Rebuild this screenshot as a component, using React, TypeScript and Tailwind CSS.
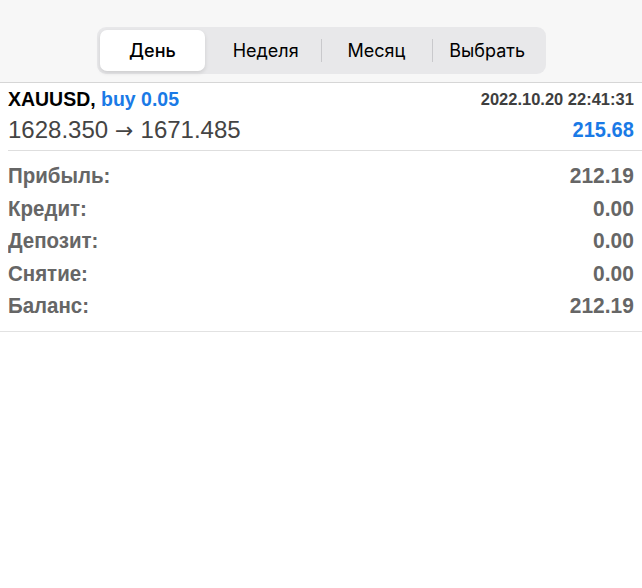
const SANS = { fontFamily: '"Liberation Sans", Arial, sans-serif' };

const SEGMENTS = ['День', 'Неделя', 'Месяц', 'Выбрать'];

const SUMMARY: [string, string][] = [
  ['Прибыль:', '212.19'],
  ['Кредит:', '0.00'],
  ['Депозит:', '0.00'],
  ['Снятие:', '0.00'],
  ['Баланс:', '212.19'],
];

function Segmented() {
  const active = 0;
  return (
    <div className="flex h-[47px] w-[449px] items-stretch rounded-[9px] bg-[#e8e8ea] p-[3px]">
      {SEGMENTS.map((s, i) => (
        <div key={s} className="relative flex flex-1 items-center justify-center">
          {i > 1 && i !== active + 1 && (
            <div className="absolute left-0 top-[9px] h-[23px] w-px bg-[#c9c9cc]" />
          )}
          <div
            className={`flex h-full w-full items-center justify-center rounded-[7px] text-[18px] text-black ${
              i === active ? 'mr-[5px] bg-white font-medium shadow-[0_2px_4px_rgba(0,0,0,0.12)]' : ''
            }`}
            style={{ fontFamily: 'Inter, "Liberation Sans", sans-serif' }}
          >
            {s}
          </div>
        </div>
      ))}
    </div>
  );
}

export default function App() {
  return (
    <div className="h-[588px] w-[642px] bg-white" style={SANS}>
      <div className="flex h-[83px] items-start justify-center border-b border-[#d6d6d6] bg-[#f7f7f7] pt-[27px]">
        <Segmented />
      </div>

      <div className="pl-2">
        <div className="border-b border-[#dedede] pb-[5px] pr-2">
          <div className="flex h-[32px] items-center justify-between leading-none">
            <span className="inline-block origin-left scale-x-[0.95] whitespace-nowrap text-[20.5px] font-bold text-black">
              XAUUSD, <span className="text-[#1a7ae6]">buy 0.05</span>
            </span>
            <span className="inline-block origin-right scale-x-[0.97] whitespace-nowrap text-[17px] font-bold text-[#3e3e3e]">
              2022.10.20 22:41:31
            </span>
          </div>
          <div className="flex h-[30px] items-center justify-between leading-none">
            <span className="whitespace-nowrap text-[24px] text-[#444]">
              1628.350
              <span style={{ fontFamily: '"DejaVu Sans", sans-serif' }} className="mx-[7px] text-[22px]">
                →
              </span>
              1671.485
            </span>
            <span className="inline-block origin-right scale-x-[0.89] text-[22.5px] font-bold text-[#1a7ae6]">
              215.68
            </span>
          </div>
        </div>
      </div>

      <div className="border-b border-[#e2e2e2] pb-[8px] pl-2 pr-2 pt-[9px]">
        {SUMMARY.map(([k, v]) => (
          <div
            key={k}
            className="flex h-[32.5px] items-center justify-between text-[22.5px] font-bold leading-none text-[#666]"
          >
            <span className="inline-block origin-left scale-x-[0.91]">{k}</span>
            <span className="inline-block origin-right scale-x-[0.93]">{v}</span>
          </div>
        ))}
      </div>
    </div>
  );
}
